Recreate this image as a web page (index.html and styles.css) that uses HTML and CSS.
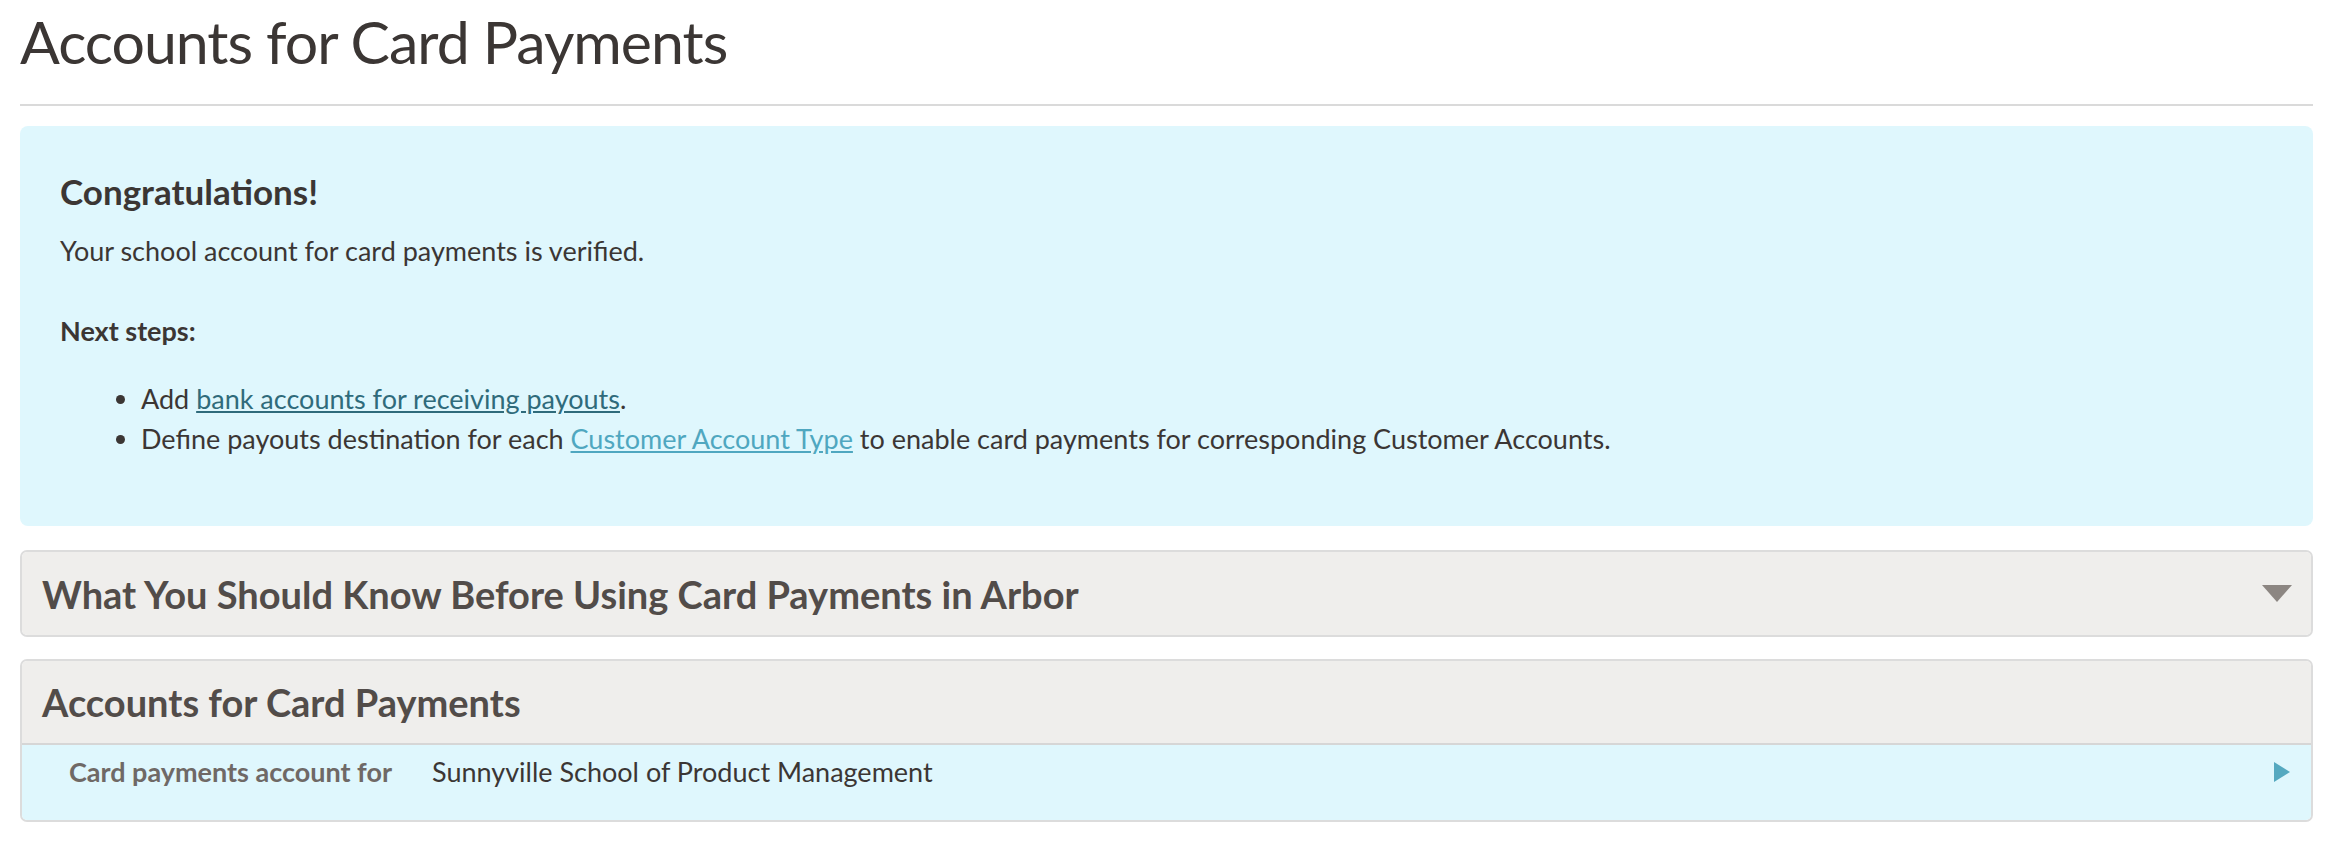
FILE: index.html
```html
<!DOCTYPE html>
<html lang="en">
<head>
  <meta charset="UTF-8" />
  <meta name="viewport" content="width=device-width, initial-scale=1.0" />
  <title>Accounts for Card Payments</title>
  <link rel="stylesheet" href="styles.css">
</head>
<body>
  <h1 class="page-title">Accounts for Card Payments</h1>

  <!-- Verified notice -->
  <div class="notice">
    <h2 class="notice-title">Congratulations!</h2>
    <p class="notice-text">Your school account for card payments is verified.</p>
    <p class="notice-sub">Next steps:</p>
    <ul class="notice-list">
      <li>Add <a href="#" class="link-visited">bank accounts for receiving payouts</a>.</li>
      <li>Define payouts destination for each <a href="#" class="link">Customer Account Type</a> to enable card payments for corresponding Customer Accounts.</li>
    </ul>
  </div>

  <!-- Collapsed info panel -->
  <div class="panel">
    <div class="panel-header">
      <h3 class="panel-title">What You Should Know Before Using Card Payments in Arbor</h3>
      <span class="caret-down"></span>
    </div>
  </div>

  <!-- Accounts panel -->
  <div class="panel">
    <div class="panel-header panel-header-open">
      <h3 class="panel-title">Accounts for Card Payments</h3>
    </div>
    <div class="panel-row">
      <div class="row-label">Card payments account for</div>
      <div class="row-value">Sunnyville School of Product Management</div>
      <span class="caret-right"></span>
    </div>
  </div>
</body>
</html>
```

FILE: styles.css
```css
html, body {
  margin: 0;
  padding: 0;
  background: #fff;
}
body {
  padding: 5px 15px 0 20px;
  font-family: Lato, "Open Sans", sans-serif;
  color: #3b3634;
}
.page-title {
  margin: 0;
  font-size: 59px;
  font-weight: 400;
  letter-spacing: -1px;
  line-height: 73px;
  padding-bottom: 26px;
  border-bottom: 2px solid #dadada;
}
.notice {
  margin-top: 20px;
  background: #dff7fd;
  border-radius: 8px;
  padding: 44px 40px 67px 40px;
}
.notice-title {
  margin: 0;
  font-size: 35px;
  font-weight: 700;
  line-height: 43px;
}
.notice-text {
  margin: 18px 0 0 0;
  font-size: 27px;
  line-height: 40px;
}
.notice-sub {
  margin: 40px 0 0 0;
  font-size: 27px;
  font-weight: 700;
  line-height: 40px;
}
.notice-list {
  margin: 28px 0 0 0;
  padding-left: 81px;
  font-size: 27px;
  line-height: 40px;
}
.link-visited {
  color: #2f6b7b;
}
.link {
  color: #4fa7c0;
}
.panel {
  margin-top: 24px;
  border: 2px solid #dcdcdc;
  border-radius: 7px;
  overflow: hidden;
}
.panel + .panel {
  margin-top: 22px;
}
.panel-header {
  display: flex;
  align-items: center;
  justify-content: space-between;
  height: 83px;
  padding: 0 19px 0 20px;
  background: #efeeec;
}
.panel-header-open {
  height: 82px;
  border-bottom: 2px solid #d6d6d6;
}
.panel-title {
  margin: 0;
  font-size: 38px;
  font-weight: 700;
  line-height: 46px;
  color: #524c49;
}
.caret-down {
  width: 0;
  height: 0;
  border-left: 15px solid transparent;
  border-right: 15px solid transparent;
  border-top: 17px solid #8c8682;
}
.panel-row {
  display: flex;
  align-items: flex-start;
  height: 68px;
  padding: 7px 21px 0 20px;
  background: #dff7fd;
  font-size: 27px;
  line-height: 40px;
}
.row-label {
  width: 350px;
  text-align: right;
  font-weight: 700;
  color: #6f6966;
}
.row-value {
  flex: 1;
  margin-left: 40px;
  color: #3b3634;
}
.caret-right {
  margin-top: 10px;
  width: 0;
  height: 0;
  border-top: 10px solid transparent;
  border-bottom: 10px solid transparent;
  border-left: 16px solid #55a9c0;
}
```
